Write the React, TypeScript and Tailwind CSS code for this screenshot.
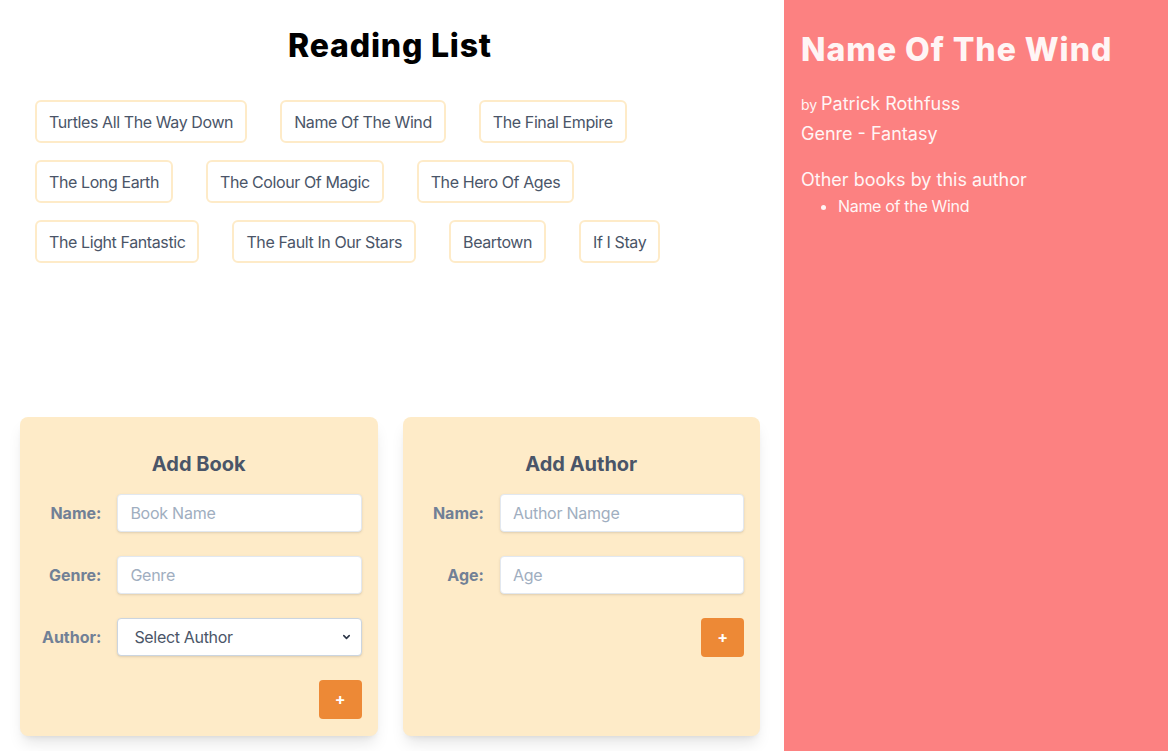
import React from 'react'

const books = [
    ['Turtles All The Way Down', 'Name Of The Wind', 'The Final Empire'],
    ['The Long Earth', 'The Colour Of Magic', 'The Hero Of Ages'],
    ['The Light Fantastic', 'The Fault In Our Stars', 'Beartown', 'If I Stay'],
]

function Field({ label, placeholder }: { label: string; placeholder: string }) {
    return (
        <div className="flex items-center mb-6">
            <label className="w-1/4 pr-4 text-right font-bold text-[#718096]">{label}</label>
            <input
                type="text"
                placeholder={placeholder}
                className="w-3/4 bg-white border border-[#e2e8f0] rounded shadow py-2 px-3 leading-tight tracking-[-0.015em] text-[#4a5568] placeholder:text-[#a0aec0] outline-none"
            />
        </div>
    )
}

function AddButton() {
    return (
        <div className="flex justify-end">
            <button className="bg-[#ed8936] text-white font-bold rounded px-4 py-2 leading-[23px] text-base">+</button>
        </div>
    )
}

export default function App() {
    return (
        <div className="flex h-[751px] w-full overflow-hidden bg-white" style={{ fontFamily: 'Inter, "Noto Sans", sans-serif' }}>
            <div className="flex-1 flex flex-col">
                <h1 className="text-center text-[32px] leading-9 font-extrabold tracking-[0.025em] text-black pt-[28px] pr-1">Reading List</h1>
                <ul className="flex flex-col gap-y-[17px] pl-[35px] mt-[36px]">
                    {books.map((row, i) => (
                        <li key={i} className="flex gap-x-[33px]">
                            {row.map((b) => (
                                <button key={b} className="border-2 border-[#feebc8] rounded-md px-3 pt-[9px] pb-[7px] leading-[23px] tracking-[-0.025em] text-[#4a5568] bg-white">
                                    {b}
                                </button>
                            ))}
                        </li>
                    ))}
                </ul>
                <div className="mt-auto grid grid-cols-2 gap-[25px] pl-5 pr-6 pb-[15px]">
                    <form className="bg-[#feebc8] rounded-lg shadow-lg px-4 pt-[33px] pb-[17px]">
                        <h2 className="text-center text-xl font-bold text-[#4a5568] mb-4">Add Book</h2>
                        <Field label="Name:" placeholder="Book Name" />
                        <Field label="Genre:" placeholder="Genre" />
                        <div className="flex items-center mb-6">
                            <label className="w-1/4 pr-4 text-right font-bold text-[#718096]">Author:</label>
                            <div className="w-3/4 relative">
                                <select className="w-full appearance-none bg-white border border-[#cbd5e0] rounded shadow py-2 pl-4 pr-8 leading-tight tracking-[-0.02em] text-[#4a5568] outline-none">
                                    <option>Select Author</option>
                                </select>
                                <svg className="absolute right-[11px] top-1/2 -translate-y-1/2 w-[9px] h-[9px] text-[#2d3748]" viewBox="0 0 10 10" fill="none" stroke="currentColor" strokeWidth="1.8" strokeLinecap="round" strokeLinejoin="round">
                                    <path d="M2 3.5 L5 6.5 L8 3.5" />
                                </svg>
                            </div>
                        </div>
                        <AddButton />
                    </form>
                    <form className="bg-[#feebc8] rounded-lg shadow-lg px-4 pt-[33px] pb-[17px]">
                        <h2 className="text-center text-xl font-bold text-[#4a5568] mb-4">Add Author</h2>
                        <Field label="Name:" placeholder="Author Namge" />
                        <Field label="Age:" placeholder="Age" />
                        <AddButton />
                    </form>
                </div>
            </div>
            <aside className="w-96 shrink-0 bg-[#fc8181] text-[#fff5f5] px-[17px] pt-[30px]">
                <h2 className="text-[32px] font-extrabold leading-10 tracking-[0.03em]">Name Of The Wind</h2>
                <p className="mt-5 text-lg leading-7">
                    <span className="text-sm">by </span>Patrick Rothfuss
                </p>
                <p className="mt-[2px] text-lg leading-7">Genre - Fantasy</p>
                <p className="mt-[18px] text-lg leading-7">Other books by this author</p>
                <ul className="list-disc pl-[37px] leading-6 tracking-[-0.02em]">
                    <li>Name of the Wind</li>
                </ul>
            </aside>
        </div>
    )
}
